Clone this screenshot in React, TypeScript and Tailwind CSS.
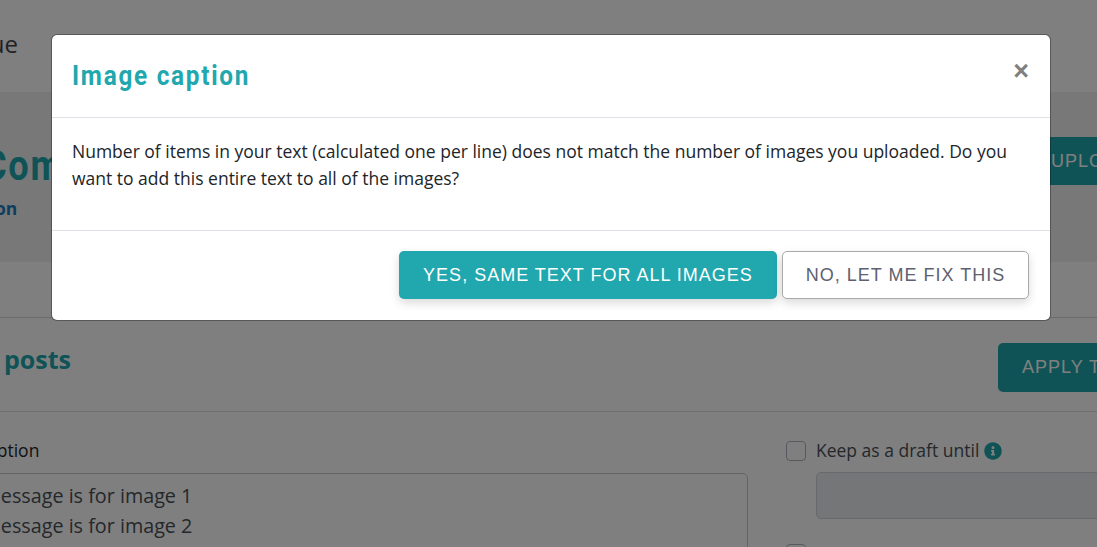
export default function App() {
  const open = "font-['Open_Sans',sans-serif]";
  return (
    <div className={`relative h-[547px] w-[1097px] overflow-hidden bg-white ${open} text-[#212529]`}>
      {/* page underneath */}
      <div className="flex h-[92px] items-center pb-[5px]">
        <span className="ml-[-40px] w-[58px] text-right text-[24px] leading-none text-[#3f4347]">ue</span>
      </div>
      <div className="flex h-[170px] items-start justify-between bg-[#f1f1f1] pt-[45px]">
        <div className="ml-[-17px] flex flex-col">
          <span className="h-[58px] origin-left scale-x-[0.86] whitespace-nowrap font-['Roboto',sans-serif] text-[42px] font-bold leading-[58px] tracking-[2px] text-[#21a7ae]">Com</span>
          <span className="ml-[12px] mt-[1px] text-[17.5px] font-bold leading-[24px] text-[#1a7ac0]">on</span>
        </div>
        <div className="mr-[-60px] flex h-[48px] w-[114px] shrink-0 items-center rounded-[5px] bg-[#21a7ae] pl-[8px] font-['Liberation_Sans',sans-serif] text-[18px] tracking-[1px] text-white">
          UPLOAD
        </div>
      </div>
      <div className="h-[56px] border-b border-[#d9d9d9]" />
      <div className="flex h-[94px] items-start justify-between border-b border-[#dcdcdc] pt-[25px]">
        <span className="ml-[-20px] w-[91px] text-right text-[25px] font-bold leading-[32px] text-[#21a7ae]">posts</span>
        <div className="mr-[-60px] flex h-[49px] w-[159px] items-center rounded-[5px] bg-[#21a7ae] pl-[24px] font-['Liberation_Sans',sans-serif] text-[18px] tracking-[1px] text-white">
          APPLY TO
        </div>
      </div>
      <div className="flex gap-[38px] pt-[24px]">
        <div className="ml-[-20px] flex w-[768px] shrink-0 flex-col">
          <span className="ml-[-4px] text-[17.5px] leading-[29px]">Caption</span>
          <div className="mt-[8px] h-[100px] rounded-[5px] border border-[#c8c8c8] pt-[7px] text-[19.75px] leading-[30px] text-[#495057]">
            <div className="ml-[-41px]">This message is for image 1</div>
            <div className="ml-[-41px]">This message is for image 2</div>
          </div>
        </div>
        <div className="flex shrink-0 flex-col">
          <div className="flex items-center gap-[10px] pt-[5px]">
            <span className="h-[20px] w-[20px] rounded-[4px] border border-[#adb5bd] bg-white" />
            <span className="-translate-y-[1px] text-[17.5px] leading-[20px] text-[#495057]">Keep as a draft until</span>
            <svg viewBox="0 0 512 512" className="ml-[-5px] h-[18px] w-[18px] fill-[#21a7ae]">
              <path d="M256 8C119 8 8 119 8 256s111 248 248 248 248-111 248-248S393 8 256 8zm0 110c23 0 42 19 42 42s-19 42-42 42-42-19-42-42 19-42 42-42zm56 254c0 7-5 12-12 12h-88c-7 0-12-5-12-12v-24c0-7 5-12 12-12h12v-64h-12c-7 0-12-5-12-12v-24c0-7 5-12 12-12h64c7 0 12 5 12 12v100h12c7 0 12 5 12 12v24z" />
            </svg>
          </div>
          <div className="ml-[30px] mt-[11px] h-[47px] w-[400px] rounded-[5px] border border-[#ced4da] bg-[#e9ecef]" />
          <div className="mt-[25px] h-[20px] w-[20px] rounded-[4px] border border-[#adb5bd] bg-white" />
        </div>
      </div>

      {/* backdrop */}
      <div className="absolute inset-0 bg-black/50" />

      {/* modal */}
      <div className="absolute left-[51px] top-[34px] flex h-[287px] w-[1000px] flex-col rounded-[6px] border border-black/30 bg-white bg-clip-padding">
        <div className="flex h-[83px] items-start justify-between border-b border-[#dee2e6] pl-[20px] pr-[21px]">
          <h2 className="mt-[22px] origin-left scale-x-[0.868] whitespace-nowrap font-['Roboto',sans-serif] text-[28px] font-bold leading-[38px] tracking-[2px] text-[#21a7ae]">
            Image caption
          </h2>
          <span className="mt-[18px] font-['Liberation_Sans',sans-serif] text-[27px] font-bold leading-[36px] text-[#7f7f7f]">×</span>
        </div>
        <div className="h-[113px] border-b border-[#dee2e6] px-[20px] pt-[20px] text-[17.5px] leading-[27px] text-[#212529]">
          Number of items in your text (calculated one per line) does not match the number of images you uploaded. Do you want to add this entire text to all of the images?
        </div>
        <div className="flex justify-end gap-[5px] pr-[21px] pt-[20px] font-['Liberation_Sans',sans-serif] text-[18px] tracking-[1px]">
          <button className="h-[48px] w-[378px] rounded-[5px] bg-[#21a7ae] text-white shadow-[0_4px_10px_rgba(0,0,0,0.15)]">
            YES, SAME TEXT FOR ALL IMAGES
          </button>
          <button className="h-[48px] w-[247px] rounded-[5px] border border-[#aaaaaa] bg-white text-[#5d6170] shadow-[0_4px_10px_rgba(0,0,0,0.15)]">
            NO, LET ME FIX THIS
          </button>
        </div>
      </div>
    </div>
  );
}
